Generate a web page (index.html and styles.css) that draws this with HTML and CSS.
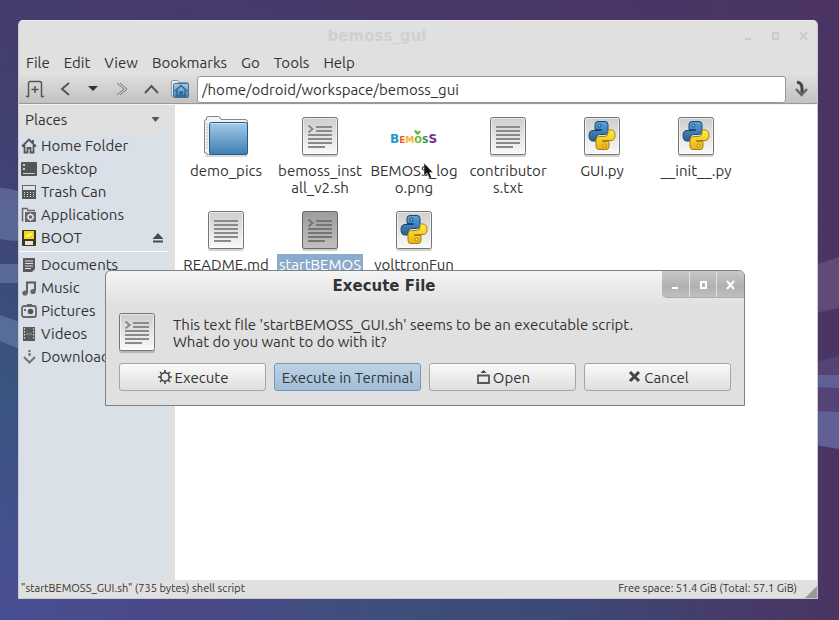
FILE: index.html
```html
<!DOCTYPE html>
<html lang="en">
<head>
<meta charset="utf-8">
<title>bemoss_gui</title>
<link rel="stylesheet" href="styles.css">
</head>
<body>
<svg class="defs" aria-hidden="true">
  <defs>
    <linearGradient id="paper" x1="0" y1="0" x2="0" y2="1"><stop offset="0" stop-color="#cdcdcd"/><stop offset="1" stop-color="#fafafa"/></linearGradient>
    <linearGradient id="dark" x1="0" y1="0" x2="0" y2="1"><stop offset="0" stop-color="#9c9c9c"/><stop offset="1" stop-color="#c0c0c0"/></linearGradient>
    <linearGradient id="blue" x1="0" y1="0" x2="0" y2="1"><stop offset="0" stop-color="#a6cbe8"/><stop offset="1" stop-color="#3a7fb4"/></linearGradient>
    <linearGradient id="pyblue" x1="0" y1="0" x2="0" y2="1"><stop offset="0" stop-color="#5aa2e0"/><stop offset="1" stop-color="#29608f"/></linearGradient>
    <linearGradient id="pyyel" x1="0" y1="1" x2="0" y2="0"><stop offset="0" stop-color="#ffee48"/><stop offset="1" stop-color="#eab010"/></linearGradient>
    <symbol id="i-page" viewBox="0 0 48 48">
      <rect x="6" y="7" width="36" height="38" rx="2" fill="#000" opacity=".18"/>
      <rect x="6.5" y="5.500" width="35" height="37" rx="2" fill="url(#paper)" stroke="#747474"/>
      <rect x="7.500" y="6.500" width="33" height="35" rx="1" fill="none" stroke="#fff" opacity=".55"/>
    </symbol>
    <symbol id="i-text" viewBox="0 0 48 48">
      <use href="#i-page"/>
      <path d="M12 15h24M12 19h24M12 23h24M12 27h24M12 31h24M12 35h17" stroke="#8a8a8a" stroke-width="2"/>
    </symbol>
    <symbol id="i-lines" viewBox="0 0 48 48">
      <path d="M20 15h16M20 19h16M12 23h24M12 27h24M12 31h24M12 35h17" stroke="#8a8a8a" stroke-width="2"/>
      <path d="M12.500 13.500l4 3.500-4 3.500" fill="none" stroke="#8a8a8a" stroke-width="2"/>
    </symbol>
    <symbol id="i-script" viewBox="0 0 48 48"><use href="#i-page"/><use href="#i-lines"/></symbol>
    <symbol id="i-script-on" viewBox="0 0 48 48">
      <rect x="6" y="7" width="36" height="38" rx="2" fill="#000" opacity=".18"/>
      <rect x="6.500" y="5.500" width="35" height="37" rx="2" fill="url(#dark)" stroke="#666"/>
      <g style="filter:brightness(.85)"><use href="#i-lines"/></g>
    </symbol>
    <symbol id="i-python" viewBox="0 0 48 48">
      <use href="#i-page"/>
      <path d="M20 9.500h7q3 0 3 3v6.500q0 3.500-3.500 3.500h-5q-3.500 0-3.500 3.500v3h-3q-4 0-4-5.500 0-5 4-5h8.500v-1H17v-5q0-3 3-3z" fill="url(#pyblue)" stroke="#1d4470"/>
      <path d="M20 9.500h7q3 0 3 3v6.500q0 3.500-3.500 3.500h-5q-3.500 0-3.500 3.500v3h-3q-4 0-4-5.500 0-5 4-5h8.500v-1H17v-5q0-3 3-3z" transform="rotate(180 24 23.500)" fill="url(#pyyel)" stroke="#a97f10"/>
      <circle cx="21.500" cy="13.500" r="1.500" fill="#8cc4f4" stroke="#1d4470"/>
      <circle cx="26.500" cy="33.500" r="1.500" fill="#fff39a" stroke="#a97f10"/>
    </symbol>
    <symbol id="i-folder" viewBox="0 0 48 48">
      <path d="M3 43h42v2H3z" opacity=".15"/>
      <path d="M2.500 41V9.500q0-2 2-2V6q0-1.500 2-1.500h10q2 0 2.500 3h24q2.500 0 2.500 2V41q0 1.500-2 1.500h-37q-2 0-2-1.500z" fill="#f2f2f2" stroke="#858585"/>
      <path d="M4 12h2M4 15h2M4 18h2M4 21h2M4 24h2M4 27h2M4 30h2M4 33h2M4 36h2" stroke="#bbb"/>
      <rect x="7.500" y="10.500" width="38" height="32" rx="2" fill="url(#blue)" stroke="#2b5b85"/>
      <path d="M9 11.500h35" stroke="#cfe5f6"/>
    </symbol>
    <linearGradient id="floor"><stop offset="0" stop-color="#474f92"/><stop offset=".22" stop-color="#4a4887"/><stop offset=".46" stop-color="#3d4f7c"/><stop offset=".68" stop-color="#3d4876"/><stop offset=".9" stop-color="#463a68"/><stop offset="1" stop-color="#4a3462"/></linearGradient>
  </defs>
</svg>
<svg class="wallpaper" viewBox="0 0 839 620" preserveAspectRatio="none" aria-hidden="true">
  <path d="M0 590h839v30H0z" fill="url(#floor)"/>
  <path d="M0 188q10 0 20 4v49q-10 0-20-2zM0 264h20v19H0zM0 315l20 7v27l-20-8z" fill="#8fa3cf" opacity=".35"/>
  <path d="M815 265l24-8v51l-24 5z" fill="#604a78"/>
  <path d="M815 362l24-6v58l-24-3z" fill="#564376"/>
  <path d="M815 375h24v13l-24-1zM815 411l24 1v37l-24-4z" fill="#606096"/>
</svg>
<div class="desktop">
  <main class="window">
    <header class="titlebar">
      <h1>bemoss_gui</h1>
      <div class="controls">
        <button type="button" aria-label="Minimize"><svg width="11" height="11"><path d="M2 9h6" stroke="currentColor" stroke-width="2"/></svg></button>
        <button type="button" aria-label="Maximize"><svg width="11" height="11"><path d="M3 3h5v6H3z" fill="none" stroke="currentColor" stroke-width="2"/></svg></button>
        <button type="button" aria-label="Close"><svg width="11" height="11"><path d="M2 2l7 8M9 2l-7 8" stroke="currentColor" stroke-width="2"/></svg></button>
      </div>
    </header>
    <nav class="menubar">
      <button type="button">File</button><button type="button">Edit</button><button type="button">View</button><button type="button">Bookmarks</button><button type="button">Go</button><button type="button">Tools</button><button type="button">Help</button>
    </nav>
    <div class="toolbar">
      <button type="button" aria-label="New tab"><svg width="18" height="18"><path d="M0 16.500h2.500V3.500q0-2 2-2h9q2 0 2 2v13H18M9 6v7M5.500 9.500h7" fill="none" stroke="#555" stroke-width="1.500"/></svg></button>
      <button type="button" aria-label="Back"><svg width="18" height="18"><path d="M14 3L7 9l7 6" fill="none" stroke="#555" stroke-width="2"/></svg></button>
      <button type="button" aria-label="History"><svg width="18" height="18"><path d="M4 6h10l-5 5z" fill="#333"/></svg></button>
      <button type="button" aria-label="Forward"><svg width="18" height="18"><path d="M5 3l7 6-7 6M8 3l7 6-7 6" transform="translate(-1)" fill="none" stroke="#777"/></svg></button>
      <button type="button" aria-label="Up"><svg width="18" height="18"><path d="M3 13l6.500-7 6.500 7" fill="none" stroke="#555" stroke-width="2"/></svg></button>
      <button type="button" aria-label="Home"><svg width="18" height="18"><path d="M.5 16V1.500q0-1 1-1h5l1 2h9q1 0 1 1V16z" fill="#e8eef2" stroke="#8a9aa6"/><rect x="2.500" y="3.500" width="15" height="14" rx="1" fill="url(#blue)" stroke="#3d6f97"/><path d="M4 11l6-5.500 6 5.500M6 10.500V16h3v-4h2v4h3v-5.500" fill="none" stroke="#326288" stroke-width="1.500"/></svg></button>
      <input class="path" type="text" aria-label="Location" value="/home/odroid/workspace/bemoss_gui">
      <button type="button" aria-label="Go to location"><svg width="18" height="18"><path d="M5 2q5 1 5 6v5" fill="none" stroke="#444" stroke-width="3"/><path d="M4 9l5.500 6L15 9" fill="none" stroke="#666" stroke-width="2.500"/></svg></button>
    </div>
    <div class="content">
      <aside class="sidebar">
        <button class="places" type="button"><span>Places</span><svg width="9" height="7"><path d="M.5 1h8l-4 5z" fill="#555"/></svg></button>
        <ul>
          <li><a href="#"><svg width="16" height="16"><path d="M1 8.500L8 1.500l7 7M3.500 7v7.500h3V10h3v4.500h3V7M12 2v4" fill="none" stroke="#555" stroke-width="1.800"/></svg>Home Folder</a></li>
          <li><a href="#"><svg width="16" height="16"><rect y="1" width="16" height="14" rx="1" fill="#555"/><path d="M2 3h2v2H2zM2 7h2v2H2zM2 12h12v1H2z" fill="#c9ced6"/></svg>Desktop</a></li>
          <li><a href="#"><svg width="16" height="16"><rect x="1.500" y="1.500" width="13" height="13" fill="#dfe3e8" stroke="#666"/><path d="M1 6h14v9H1z" fill="#555"/><path d="M3 8.500h10M3 10.500h10M3 12.500h10" stroke="#dfe3e8" stroke-dasharray="1 2"/></svg>Trash Can</a></li>
          <li><a href="#"><svg width="16" height="16"><path d="M1.500 14.500V1.500H6l1 2h7" fill="none" stroke="#666" stroke-width="1.500"/><path d="M4 5h11v10H4z" fill="#666"/><circle cx="9.500" cy="10" r="2.500" fill="none" stroke="#dfe3e8" stroke-width="1.500"/><path d="M9.500 6v8M5.500 10h8" stroke="#dfe3e8" stroke-dasharray="1 6"/></svg>Applications</a></li>
          <li><a href="#"><svg width="16" height="16"><rect x="1" y="0" width="14" height="16" rx="1" fill="#3d3526"/><path d="M3 1h10v8H3z" fill="#f0d91c"/><path d="M5 5l6-2v2L5 7z" fill="#fff68a"/><path d="M4 11h8v4H4z" fill="#e8e2d2"/></svg>BOOT</a><button class="eject" type="button" aria-label="Eject BOOT"><svg width="12" height="10"><path d="M6 0l5.500 6H.5zM1 7.500h10V9.500H1z" fill="#4a4a4a"/></svg></button></li>
        </ul>
        <hr>
        <ul>
          <li><a href="#"><svg width="16" height="16"><path d="M2 1h12v11l-3 3H2z" fill="#5a5a5a"/><path d="M4 4h8M4 6.500h8M4 9h8M4 11.500h6" stroke="#dadfe6"/></svg>Documents</a></li>
          <li><a href="#"><svg width="16" height="16"><path d="M6 13V2.500h8V11" fill="none" stroke="#555" stroke-width="1.800"/><circle cx="4" cy="13" r="2.600" fill="#666"/><circle cx="12" cy="11.500" r="2.600" fill="#666"/></svg>Music</a></li>
          <li><a href="#"><svg width="16" height="16"><rect x="1" y="3" width="14" height="11" rx="2" fill="none" stroke="#666" stroke-width="1.800"/><path d="M6 1h5v2H6zM3 6h2v2H3z" fill="#666"/><circle cx="9.500" cy="8.500" r="2.800" fill="#555"/></svg>Pictures</a></li>
          <li><a href="#"><svg width="16" height="16"><path d="M2 1h12v14H2z" fill="#5a5a5a"/><path d="M3.500 2v12M12.500 2v12" stroke="#dadfe6" stroke-dasharray="1.500 1.500"/><path d="M5 8h6" stroke="#999"/></svg>Videos</a></li>
          <li><a href="#"><svg width="16" height="16"><path d="M3 8l5.500 5.500L14 8" fill="none" stroke="#777" stroke-width="2.200"/><path d="M7.500 1h2v2h-2zM7.500 4h2v3h-2z" fill="#666"/></svg>Downloads</a></li>
        </ul>
      </aside>
      <section class="files" aria-label="Files">
        <figure><svg width="48" height="48"><use href="#i-folder"/></svg><figcaption>demo_pics</figcaption></figure>
        <figure><svg width="48" height="48"><use href="#i-script"/></svg><figcaption>bemoss_inst<br>all_v2.sh</figcaption></figure>
        <figure><svg width="48" height="48" class="logo"><text y="31" font-size="12"><tspan fill="#189bd7">B</tspan><tspan font-size="9" fill="#e8622a">E</tspan><tspan font-size="9" fill="#f3b72c">M</tspan><tspan font-size="9" fill="#65b32e">O</tspan><tspan font-size="9" fill="#2b9a48">S</tspan><tspan fill="#7d2a90">S</tspan></text><path d="M24 18q3 0 4 2 1-2 3-1-1 2-3 4-3-1-4-5z" fill="#65b32e"/></svg><figcaption>BEMOSS_log<br>o.png</figcaption>
          <svg class="cursor" width="12" height="18" aria-hidden="true"><path d="M1 1v13l3-3 2.500 5.500 2-1L6.500 10.500H10z" fill="#111" stroke="#eee" stroke-width=".5"/></svg></figure>
        <figure><svg width="48" height="48"><use href="#i-text"/></svg><figcaption>contributor<br>s.txt</figcaption></figure>
        <figure><svg width="48" height="48"><use href="#i-python"/></svg><figcaption>GUI.py</figcaption></figure>
        <figure><svg width="48" height="48"><use href="#i-python"/></svg><figcaption>__init__.py</figcaption></figure>
        <figure><svg width="48" height="48"><use href="#i-text"/></svg><figcaption>README.md</figcaption></figure>
        <figure class="selected"><svg width="48" height="48"><use href="#i-script-on"/></svg><figcaption>startBEMOS</figcaption></figure>
        <figure><svg width="48" height="48"><use href="#i-python"/></svg><figcaption>volttronFun</figcaption></figure>
      </section>
    </div>
    <footer class="statusbar"><span>"startBEMOSS_GUI.sh" (735 bytes) shell script</span><span>Free space: 51.4 GiB (Total: 57.1 GiB)</span><svg width="12" height="12" aria-hidden="true"><path d="M12 0v12H0z" fill="#999"/></svg></footer>
  </main>
  <div class="dialog" role="dialog" aria-labelledby="dialog-title">
    <header class="titlebar">
      <h2 id="dialog-title">Execute File</h2>
      <div class="controls">
        <button type="button" aria-label="Minimize"><svg width="11" height="11"><path d="M2 9h6" stroke="currentColor" stroke-width="2"/></svg></button>
        <button type="button" aria-label="Maximize"><svg width="11" height="11"><path d="M3 3h5v6H3z" fill="none" stroke="currentColor" stroke-width="2"/></svg></button>
        <button type="button" aria-label="Close"><svg width="11" height="11"><path d="M2 2l7 8M9 2l-7 8" stroke="currentColor" stroke-width="2"/></svg></button>
      </div>
    </header>
    <div class="message">
      <svg width="36" height="40" viewBox="6 5 36 40"><use href="#i-script" width="48" height="48"/></svg>
      <p>This text file 'startBEMOSS_GUI.sh' seems to be an executable script.<br>What do you want to do with it?</p>
    </div>
    <div class="actions">
      <button type="button"><svg width="16" height="16"><circle cx="8" cy="8" r="4.200" fill="none" stroke="#444" stroke-width="1.600"/><path d="M8 1v3M8 12v3M1 8h3M12 8h3M3 3l2 2M11 11l2 2M13 3l-2 2M5 11l-2 2" stroke="#444" stroke-width="1.600"/></svg>Execute</button>
      <button class="primary" type="button">Execute in Terminal</button>
      <button type="button"><svg width="16" height="16"><path d="M6 6.500H3v7.500h11V6.500h-3M6 6.500h5" fill="none" stroke="#555" stroke-width="1.800"/><path d="M5.500 4L8.500 1l3 3z" fill="#444"/></svg>Open</button>
      <button type="button"><svg width="16" height="16"><path d="M4 3l9 9M13 3l-9 9" stroke="#444" stroke-width="3"/></svg>Cancel</button>
    </div>
  </div>
</div>
</body>
</html>
```
FILE: styles.css
```css
* { box-sizing: border-box; }
body {
  margin: 0;
  font: 15px/17px "Ubuntu", "Noto Sans", sans-serif;
  color: #333;
  background:
    linear-gradient(90deg, transparent 0, #4b3463 100%),
    linear-gradient(#453b6f 0, #3f4373 30%, #39557f 62%, #474f92 95%);
}
button { font: inherit; color: inherit; background: none; border: 0; padding: 0; display: flex; align-items: center; justify-content: center; }
svg { display: block; flex: none; }
ul, figure, p, h1, h2 { margin: 0; padding: 0; list-style: none; }
a { color: inherit; text-decoration: none; }
.defs { position: absolute; width: 0; height: 0; }
.wallpaper { position: absolute; width: 100%; height: 100%; }
.desktop { position: relative; display: flex; min-height: 100vh; padding: 20px 21px 21px 18px; }

.window {
  flex: 1;
  display: flex;
  flex-direction: column;
  background: #e0e0e0;
  border: 1px solid #c8c8cc;
  border-top-color: #eee;
  border-radius: 5px 5px 0 0;
}
.titlebar { display: flex; height: 29px; }
.titlebar h1, .titlebar h2 { flex: 1; text-align: center; font: bold 15px/30px "DejaVu Sans", sans-serif; }
.titlebar h1 { color: #d0d0d0; }
.controls { display: flex; width: 82px; }
.controls button { flex: 1; }
.window .controls { color: #cacaca; }

.menubar { display: flex; gap: 14px; height: 25px; padding: 0 7px; }
.toolbar {
  display: flex;
  align-items: center;
  gap: 11px;
  height: 29px;
  padding: 0 7px;
  background: linear-gradient(#dedede, #c2c2c2);
  border-bottom: 1px solid #999;
}
.path {
  flex: 1;
  min-width: 0;
  height: 27px;
  margin: 0 -5px 0 -3px;
  padding: 0 4px;
  font: inherit;
  color: #333;
  background: #fff;
  border: 1px solid #999;
  border-radius: 3px;
}
.content { flex: 1; display: flex; border-top: 1px solid #f4f4f4; }
.sidebar { width: 156px; padding-right: 7px; background: linear-gradient(90deg, #dae0e8 149px, #e0e0e0 149px); }
.places { width: 100%; height: 29px; padding: 0 8px 0 6px; justify-content: space-between; background: #e0e0e0; }
.sidebar li { display: flex; align-items: center; justify-content: space-between; height: 23px; padding: 0 4px 0 2px; }
.sidebar a { display: flex; align-items: center; gap: 4px; }
.sidebar hr { margin: 2px 0 1px; border: 0; border-top: 1px solid #fff; }
.files {
  flex: 1;
  display: grid;
  grid-template-columns: repeat(auto-fill, 94px);
  grid-auto-rows: 94px;
  align-content: start;
  padding: 7px 0 0 4px;
  background: #fff;
}
.files figure { position: relative; display: flex; flex-direction: column; align-items: center; text-align: center; }
.files figcaption { padding: 2px 2px 0; white-space: nowrap; }
.selected figcaption { color: #fff; background: #8aaccc; }
.logo { font-family: "DejaVu Sans", sans-serif; font-weight: bold; }
.cursor { position: absolute; left: 56px; top: 50px; }
.statusbar { display: flex; height: 18px; padding-left: 2px; font-size: 11px; line-height: 16px; }
.statusbar span:first-child { flex: 1; }
.statusbar svg { margin-left: 8px; align-self: end; }

.dialog {
  position: absolute;
  top: 270px;
  left: 105px;
  right: 94px;
  background: linear-gradient(#f4f4f4, #e0e0e0 36px);
  border: 1px solid #808080;
  border-radius: 6px 6px 0 0;
}
.dialog .controls {
  height: 27px;
  color: #fff;
  background: linear-gradient(#c8c8c8, #b0b0b0 60%, #c0c0c0);
  border-bottom: 1px solid #aaa;
  border-radius: 0 5px 0 5px;
}
.dialog .controls button + button { border-left: 1px solid #e2e2e2; }
.message { display: flex; gap: 18px; padding: 13px 13px 0; }
.message p { padding-top: 3px; }
.actions { display: grid; grid-template-columns: repeat(4, 1fr); gap: 8px; padding: 10px 13px 14px; }
.actions button {
  height: 28px;
  gap: 2px;
  white-space: nowrap;
  background: linear-gradient(#fafafa, #dedede);
  border: 1px solid #a5a5a5;
  border-radius: 3px;
}
.actions .primary { background: linear-gradient(#bed3e6, #a0bed8); border-color: #7796b2; }
```
